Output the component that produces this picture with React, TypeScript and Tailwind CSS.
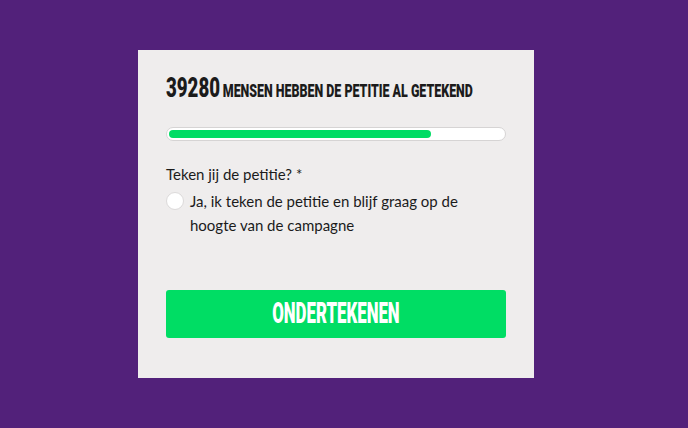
import React from 'react';

const heavy = { fontFamily: 'Roboto, "DejaVu Sans", sans-serif' };

export default function App() {
  const percent = 78.5;

  return (
    <div className="w-[688px] h-[428px] bg-[#52217a] pl-[138px] pt-[50px]">
      <div className="w-[396px] h-[328px] bg-[#efeded] px-[28px] pt-[25px]">
        {/* Counter */}
        <h2 className="h-[27px] whitespace-nowrap text-[#1b1b1b] font-black uppercase leading-none" style={heavy}>
          <span className="inline-flex items-baseline origin-left scale-x-[0.69]">
            <span className="text-[27px]">39280</span>
            <span className="text-[18px] ml-[4px]">mensen hebben de petitie al getekend</span>
          </span>
        </h2>

        {/* Progress */}
        <div className="mt-[25px] h-[14px] rounded-full bg-white border border-[#d6d4d4] p-[2px]">
          <div className="h-full rounded-full bg-[#00dc64]" style={{ width: `${percent}%` }} />
        </div>

        {/* Question */}
        <div className="mt-[22px] text-[#1b1b1b] text-[15px]" style={{ fontFamily: 'Lato, sans-serif' }}>
          <p className="leading-[22px]">Teken jij de petitie? *</p>
          <label className="mt-[4px] flex items-start gap-[6px] leading-[24px] cursor-pointer">
            <span className="mt-[3px] w-[18px] h-[18px] shrink-0 rounded-full bg-white border border-[#dcdada]" />
            <span>Ja, ik teken de petitie en blijf graag op de hoogte van de campagne</span>
          </label>
        </div>

        {/* Submit */}
        <button className="mt-[53px] w-full h-[48px] rounded-[3px] bg-[#00dd64] text-white font-black uppercase" style={heavy}>
          <span className="inline-block text-[29px] leading-none scale-x-[0.58]">Ondertekenen</span>
        </button>
      </div>
    </div>
  );
}
